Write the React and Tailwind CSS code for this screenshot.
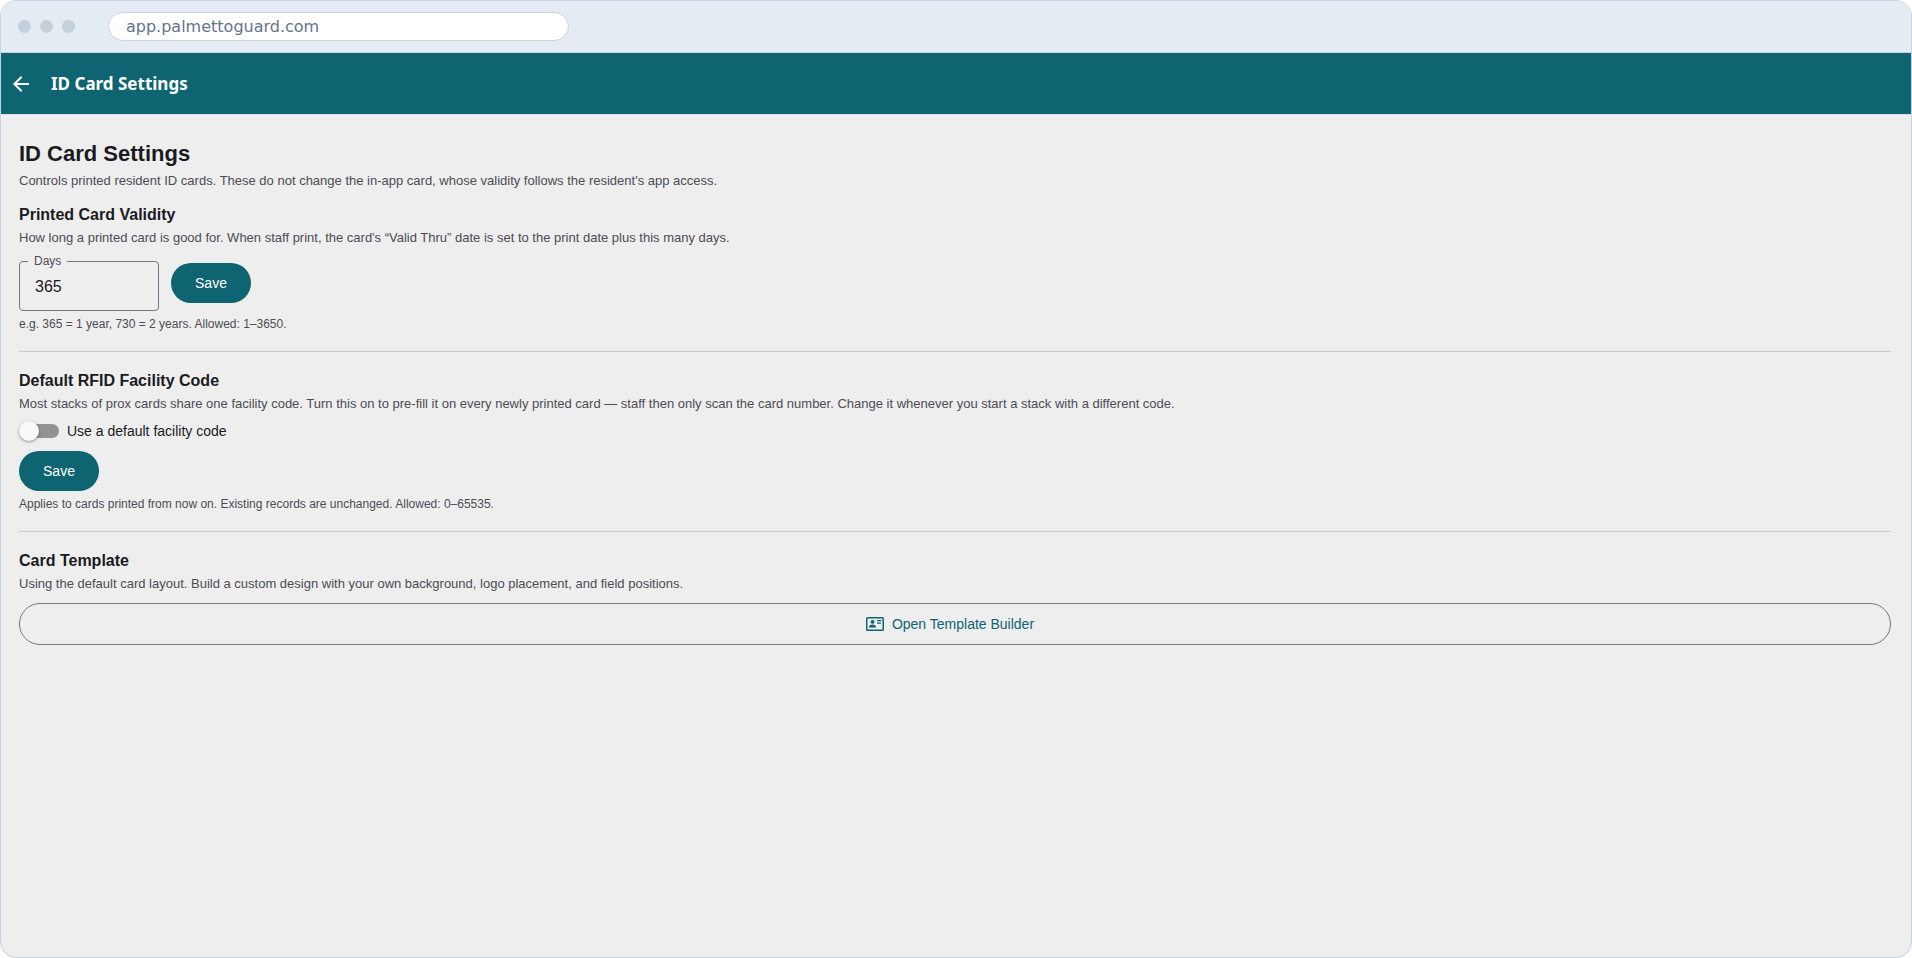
import { useState } from "react";

const DOTS = ["close", "minimize", "zoom"];

function BrowserBar() {
  return (
    <div className="flex h-[52px] items-center border-b border-[#c5d3e3] bg-[#e4ebf3] pl-[17px] pr-4">
      <div className="flex gap-[9px]" aria-hidden="true">
        {DOTS.map((dot) => (
          <span key={dot} className="size-[13px] rounded-full bg-[#c3cfdb]" />
        ))}
      </div>
      <input
        type="text"
        readOnly
        aria-label="Address"
        value="app.palmettoguard.com"
        className="ml-[33px] h-[29px] w-[461px] rounded-full border border-[#c5d3e3] bg-white px-[17px] font-['DejaVu_Sans',sans-serif] text-base text-[#64748b] outline-none"
      />
    </div>
  );
}

function AppHeader() {
  return (
    <header className="flex h-[61px] items-center bg-[#0e6470] pl-2 text-white">
      <button type="button" aria-label="Back" className="flex size-6 items-center justify-center">
        <svg viewBox="0 0 24 24" className="size-6" fill="currentColor">
          <path d="M20 11H7.83l5.59-5.59L12 4l-8 8 8 8 1.41-1.41L7.83 13H20v-2z" />
        </svg>
      </button>
      <p className="ml-[18px] font-['Noto_Sans',sans-serif] text-[17px] font-bold leading-6">
        ID Card Settings
      </p>
    </header>
  );
}

function SaveButton() {
  return (
    <button
      type="button"
      className="h-10 w-20 rounded-full bg-[#0e6470] text-sm font-medium text-white hover:bg-[#0b525c]"
    >
      Save
    </button>
  );
}

function SectionHeading({ title, children }) {
  return (
    <>
      <h2 className="text-base font-bold leading-5 text-[#1b1b1f]">{title}</h2>
      <p className="mt-1 text-[13px] leading-[18px] text-[#4d4c54]">{children}</p>
    </>
  );
}

function Helper({ children }) {
  return <p className="mt-[5px] text-xs leading-4 text-[#4d4c54]">{children}</p>;
}

function TemplateIcon() {
  return (
    <svg viewBox="0 0 18 14" className="h-[14px] w-[18px]" fill="currentColor" aria-hidden="true">
      <path
        fillRule="evenodd"
        d="M1.5 0h15A1.5 1.5 0 0 1 18 1.500v11a1.500 1.500 0 0 1-1.500 1.500h-15A1.500 1.500 0 0 1 0 12.500v-11A1.500 1.500 0 0 1 1.500 0zM1.500 1.500v11h15v-11z"
      />
      <circle cx="6.500" cy="4.900" r="1.900" />
      <path d="M3 10.500V9.700C3 8.200 5.100 7.500 6.500 7.500s3.500.7 3.500 2.200v.8z" />
      <path d="M11 3h4.500v1.200H11zM11 5.500h4v1.200h-4z" />
    </svg>
  );
}

export default function App() {
  const [days, setDays] = useState("365");
  const [useDefault, setUseDefault] = useState(false);

  return (
    <div className="flex min-h-screen flex-col overflow-hidden rounded-2xl border border-[#c5d3e3] bg-[#eeeeee] font-['Liberation_Sans',Arial,sans-serif]">
      <BrowserBar />
      <AppHeader />

      <main className="flex-1 border-t border-[#dcdcdc] px-[18px] pt-[25px] pr-5">
        <h1 className="text-[22px] font-bold leading-7 text-[#1b1b1f]">ID Card Settings</h1>
        <p className="mt-1 text-[13px] leading-[18px] text-[#4d4c54]">
          Controls printed resident ID cards. These do not change the in-app card, whose validity
          follows the resident's app access.
        </p>

        {/* Validity period */}
        <section className="mt-[15px] border-b border-[#c6c5d0] pb-[19px]">
          <SectionHeading title="Printed Card Validity">
            How long a printed card is good for. When staff print, the card's “Valid Thru” date is
            set to the print date plus this many days.
          </SectionHeading>
          <div className="mt-2 flex items-center gap-3">
            <fieldset className="h-14 w-[140px] rounded border border-[#777680] px-2">
              <legend className="px-[6px] text-xs leading-3 text-[#4d4c54]">
                <label htmlFor="days">Days</label>
              </legend>
              <input
                id="days"
                type="text"
                inputMode="numeric"
                value={days}
                onChange={(e) => setDays(e.target.value)}
                className="block h-10 w-full bg-transparent px-[7px] text-base text-[#1b1b1f] outline-none"
              />
            </fieldset>
            <SaveButton />
          </div>
          <Helper>e.g. 365 = 1 year, 730 = 2 years. Allowed: 1–3650.</Helper>
        </section>

        {/* Facility code */}
        <section className="mt-[19px] border-b border-[#c6c5d0] pb-[19px]">
          <SectionHeading title="Default RFID Facility Code">
            Most stacks of prox cards share one facility code. Turn this on to pre-fill it on every
            newly printed card — staff then only scan the card number. Change it whenever you start
            a stack with a different code.
          </SectionHeading>
          <label className="mt-2 flex h-5 w-fit cursor-pointer items-center gap-2 text-sm text-[#1b1b1f]">
            <span className="relative flex h-5 w-10 items-center">
              <input
                type="checkbox"
                role="switch"
                checked={useDefault}
                onChange={(e) => setUseDefault(e.target.checked)}
                className="peer ml-px h-[14px] w-full cursor-pointer appearance-none rounded-full bg-[#939393] checked:bg-[#0e6470]/50"
              />
              <span className="pointer-events-none absolute left-0 top-0 size-5 rounded-full bg-[#fafafa] shadow-[0_1px_3px_rgba(0,0,0,0.4)] peer-checked:left-5 peer-checked:bg-[#0e6470]" />
            </span>
            Use a default facility code
          </label>
          <div className="mt-[10px] flex">
            <SaveButton />
          </div>
          <Helper>
            Applies to cards printed from now on. Existing records are unchanged. Allowed: 0–65535.
          </Helper>
        </section>

        {/* Template */}
        <section className="mt-[19px]">
          <SectionHeading title="Card Template">
            Using the default card layout. Build a custom design with your own background, logo
            placement, and field positions.
          </SectionHeading>
          <button
            type="button"
            className="mt-[10px] flex h-[42px] w-full items-center justify-center gap-2 rounded-full border border-[#777680] pr-[10px] text-sm text-[#0e6470] hover:bg-[#0e6470]/5"
          >
            <TemplateIcon />
            Open Template Builder
          </button>
        </section>
      </main>
    </div>
  );
}
